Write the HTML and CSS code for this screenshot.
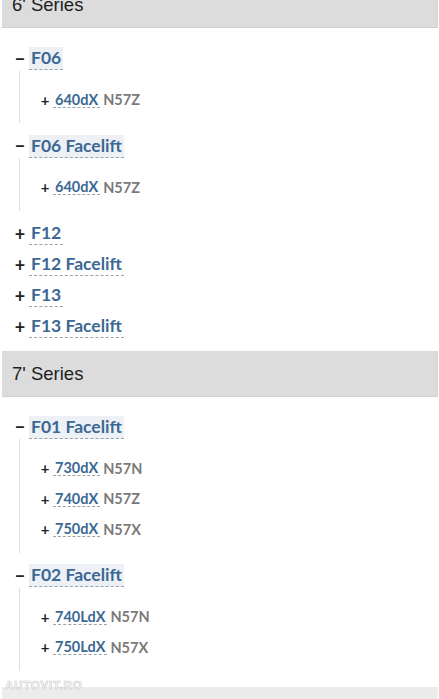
FILE: index.html
```html
<!DOCTYPE html>
<html>
<head>
<meta charset="utf-8">
<link rel="stylesheet" href="styles.css">
</head>
<body>
<div class="page">
  <section class="series">
    <h2 class="series-title">6' Series</h2>
    <ul class="tree">
      <li class="node open">
        <div class="label"><span class="toggle">−</span><a class="name">F06</a></div>
        <ul class="sub">
          <li class="leaf"><span class="ltoggle">+</span><a class="code">640dX</a><span class="engine">N57Z</span></li>
        </ul>
      </li>
      <li class="node open">
        <div class="label"><span class="toggle">−</span><a class="name">F06 Facelift</a></div>
        <ul class="sub">
          <li class="leaf"><span class="ltoggle">+</span><a class="code">640dX</a><span class="engine">N57Z</span></li>
        </ul>
      </li>
      <li class="node"><div class="label"><span class="toggle">+</span><a class="name">F12</a></div></li>
      <li class="node"><div class="label"><span class="toggle">+</span><a class="name">F12 Facelift</a></div></li>
      <li class="node"><div class="label"><span class="toggle">+</span><a class="name">F13</a></div></li>
      <li class="node"><div class="label"><span class="toggle">+</span><a class="name">F13 Facelift</a></div></li>
    </ul>
  </section>
  <section class="series">
    <h2 class="series-title">7' Series</h2>
    <ul class="tree">
      <li class="node open">
        <div class="label"><span class="toggle">−</span><a class="name">F01 Facelift</a></div>
        <ul class="sub">
          <li class="leaf"><span class="ltoggle">+</span><a class="code">730dX</a><span class="engine">N57N</span></li>
          <li class="leaf"><span class="ltoggle">+</span><a class="code">740dX</a><span class="engine">N57Z</span></li>
          <li class="leaf"><span class="ltoggle">+</span><a class="code">750dX</a><span class="engine">N57X</span></li>
        </ul>
      </li>
      <li class="node open">
        <div class="label"><span class="toggle">−</span><a class="name">F02 Facelift</a></div>
        <ul class="sub">
          <li class="leaf"><span class="ltoggle">+</span><a class="code">740LdX</a><span class="engine">N57N</span></li>
          <li class="leaf"><span class="ltoggle">+</span><a class="code">750LdX</a><span class="engine">N57X</span></li>
        </ul>
      </li>
    </ul>
  </section>
  <div class="next-bar"></div>
</div>
<div class="watermark">AUTOVIT.RO</div>
</body>
</html>
```
FILE: styles.css
```css
html, body {
  margin: 0;
  padding: 0;
  background: #ffffff;
}
body {
  font-family: Lato, "Open Sans", sans-serif;
  color: #222;
  position: relative;
  overflow: hidden;
}
.page {
  margin-top: -18px;
  padding: 0 1px 0 2px;
}
.series-title {
  margin: 0;
  height: 46px;
  box-sizing: border-box;
  background: #dcdcdc;
  border-bottom: 1px solid #d0d0d0;
  border-right: 1px solid #d4d4d4;
  padding-left: 10px;
  font-family: "Liberation Sans", Arial, sans-serif;
  font-weight: normal;
  font-size: 18.5px;
  line-height: 46px;
  color: #1e1e1e;
}
.tree {
  list-style: none;
  margin: 15px 0 8.5px 0;
  padding: 0 0 0 12px;
}
.node {
  padding: 3.5px 0;
}
.label {
  display: flex;
  align-items: center;
  height: 24px;
}
.toggle {
  width: 12px;
  margin-right: 3px;
  text-align: center;
  font-weight: 700;
  font-size: 18px;
  line-height: 24px;
  color: #222;
}
.name {
  display: inline-block;
  padding: 0 2px;
  font-size: 17.5px;
  font-weight: 700;
  line-height: 22px;
  color: #3c6894;
  border-bottom: 1px dashed #9aa3ad;
}
.open > .label .name {
  background: #edf0f4;
}
.sub {
  list-style: none;
  margin: 0 0 4px 5px;
  padding: 14px 0 8px 20px;
  border-left: 1px solid #dedede;
}
.leaf {
  display: flex;
  align-items: center;
  height: 30.5px;
}
.ltoggle {
  width: 10px;
  margin-right: 3px;
  text-align: center;
  font-weight: 700;
  font-size: 15px;
  color: #222;
}
.code {
  display: inline-block;
  padding: 0 2px;
  font-size: 14.5px;
  font-weight: 700;
  line-height: 15px;
  color: #3c6894;
  border-bottom: 1px dashed #9aa3ad;
}
.engine {
  margin-left: 3px;
  font-size: 14.5px;
  font-weight: 700;
  color: #7a7a7a;
}
.next-bar {
  margin-top: 6.5px;
  height: 20px;
  background: #ececec;
}
.watermark {
  position: absolute;
  left: 5px;
  top: 679px;
  font-family: "Liberation Sans", Arial, sans-serif;
  font-weight: 700;
  font-size: 11.5px;
  letter-spacing: 0.8px;
  color: #ffffff;
  -webkit-text-stroke: 0.6px #c8c8c8;
}
```
